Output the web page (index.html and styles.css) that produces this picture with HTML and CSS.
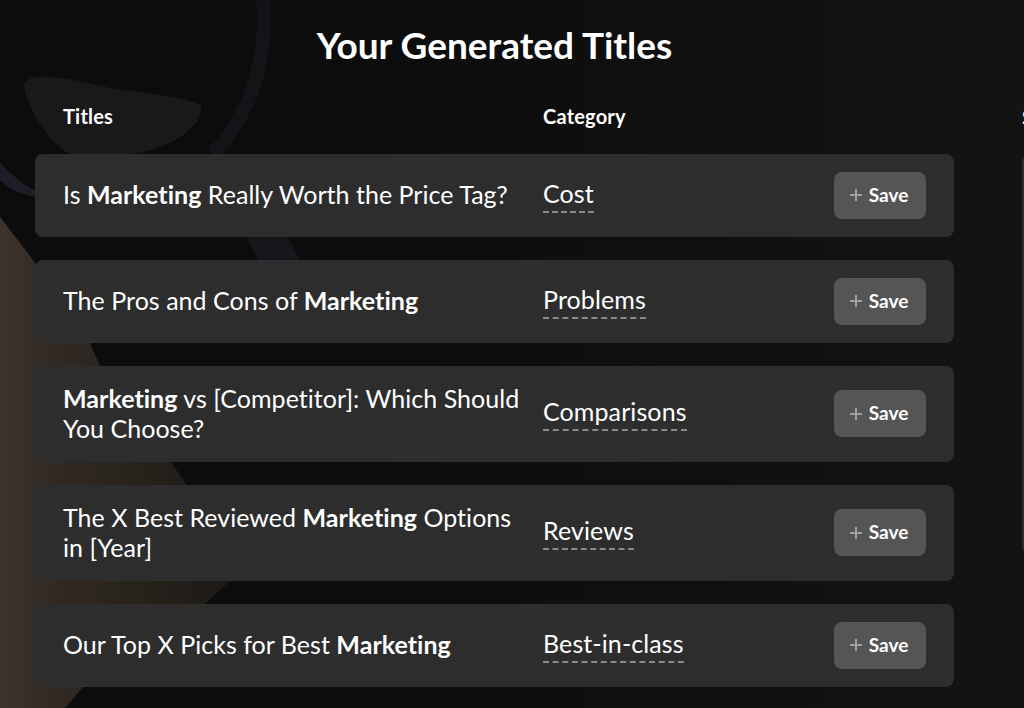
FILE: index.html
```html
<!DOCTYPE html>
<html lang="en">
<head>
<meta charset="utf-8">
<title>Your Generated Titles</title>
<link rel="stylesheet" href="styles.css">
</head>
<body>
<svg class="backdrop" viewBox="0 0 1024 708" width="1024" height="708" aria-hidden="true">
  <defs>
    <linearGradient id="skin" x1="0" y1="0" x2="1" y2="0">
      <stop offset="0" stop-color="#3e342e"/>
      <stop offset="0.2" stop-color="#322a25"/>
      <stop offset="0.6" stop-color="#28221c"/>
      <stop offset="1" stop-color="#1d1915"/>
    </linearGradient>
    <linearGradient id="wash" x1="0" y1="0" x2="1" y2="0">
      <stop offset="0.35" stop-color="#0c0c0c"/>
      <stop offset="1" stop-color="#131313"/>
    </linearGradient>
  </defs>
  <rect width="1024" height="708" fill="url(#wash)"/>
  <path fill="url(#skin)" d="M0 217 L33 260 L90 343 L100 366 L170 461 L187 485 L230 581 L205 604 L83 687 L65 708 L0 708 Z"/>
  <path class="blob-hat" d="M24 84 C30 72 60 76 110 88 C150 94 190 98 201 106 C205 125 170 150 130 154 L70 154 C45 140 26 105 24 84 Z"/>
  <path class="blob-rim" d="M263 0 C268 50 255 110 213 154"/>
  <path class="blob-band" d="M0 163 C15 178 25 186 35 190 L35 197 C20 194 5 186 0 180 Z"/>
  <path class="blob-shade" d="M247 237 L288 237 L300 260 L258 260 Z"/>
</svg>
<main class="page">
  <h1 class="heading">Your Generated Titles</h1>
  <div class="columns">
    <span class="col-title">Titles</span>
    <span class="col-category">Category</span>
  </div>
  <ul class="rows">
    <li class="row">
      <p class="title">Is <b>Marketing</b> Really Worth the Price Tag?</p>
      <div class="category"><span class="tag">Cost</span></div>
      <button class="save" type="button"><svg class="plus" viewBox="0 0 14 14" width="14" height="14"><path d="M7 1v12M1 7h12"/></svg>Save</button>
    </li>
    <li class="row">
      <p class="title">The Pros and Cons of <b>Marketing</b></p>
      <div class="category"><span class="tag">Problems</span></div>
      <button class="save" type="button"><svg class="plus" viewBox="0 0 14 14" width="14" height="14"><path d="M7 1v12M1 7h12"/></svg>Save</button>
    </li>
    <li class="row">
      <p class="title"><b>Marketing</b> vs [Competitor]: Which Should You Choose?</p>
      <div class="category"><span class="tag">Comparisons</span></div>
      <button class="save" type="button"><svg class="plus" viewBox="0 0 14 14" width="14" height="14"><path d="M7 1v12M1 7h12"/></svg>Save</button>
    </li>
    <li class="row">
      <p class="title">The X Best Reviewed <b>Marketing</b> Options in [Year]</p>
      <div class="category"><span class="tag">Reviews</span></div>
      <button class="save" type="button"><svg class="plus" viewBox="0 0 14 14" width="14" height="14"><path d="M7 1v12M1 7h12"/></svg>Save</button>
    </li>
    <li class="row">
      <p class="title">Our Top X Picks for Best <b>Marketing</b></p>
      <div class="category"><span class="tag">Best-in-class</span></div>
      <button class="save" type="button"><svg class="plus" viewBox="0 0 14 14" width="14" height="14"><path d="M7 1v12M1 7h12"/></svg>Save</button>
    </li>
  </ul>
</main>
<aside class="side">
  <h2 class="side-title">Saved</h2>
  <div class="side-panel"></div>
</aside>
</body>
</html>
```
FILE: styles.css
```css
* { box-sizing: border-box; }
html, body { margin: 0; height: 708px; overflow: hidden; }
body { background: #0c0c0c; color: #fff; font-family: "Lato", "Liberation Sans", sans-serif; font-variant-ligatures: none; position: relative; display: flex; }
.backdrop { position: absolute; left: 0; top: 0; }
.blob-hat { fill: #191919; }
.blob-rim { fill: none; stroke: #141418; stroke-width: 14; }
.blob-band { fill: #1d1d28; }
.blob-shade { fill: #16161c; }
.page { position: relative; flex: none; width: 919px; margin-left: 35px; padding-top: 23px; }
.heading { margin: 0; height: 44px; font-size: 37px; line-height: 44px; font-weight: 700; text-align: center; }
.columns { display: flex; margin-top: 37px; height: 25px; padding-left: 28px; font-size: 20px; line-height: 24px; font-weight: 700; letter-spacing: 0.2px; }
.col-title { width: 480px; }
.rows { list-style: none; margin: 25px 0 0; padding: 0; display: flex; flex-direction: column; gap: 23.25px; }
.row { display: flex; align-items: center; background: #2d2d2d; border-radius: 8px; padding: 17.875px 28px 17.875px 28px; }
.title { margin: 0; width: 480px; padding-right: 20px; font-size: 25px; line-height: 30px; font-weight: 400; letter-spacing: 0.03px; position: relative; top: -1px; }
.title b { font-weight: 700; }
.category { flex: 1; font-size: 25px; letter-spacing: 0.1px; }
.tag { display: inline-block; line-height: 29px; padding-bottom: 3px; border-bottom: 2px dashed #8a8a8a; }
.save { display: flex; align-items: center; justify-content: center; gap: 6px; width: 92px; height: 47px; border: 0; border-radius: 8px; background: #555556; color: #fff; font-family: inherit; font-size: 19px; font-weight: 700; padding: 0 0 2px; }
.plus { fill: none; stroke: #a0a0a0; stroke-width: 2; margin-left: -3px; margin-top: 2px; }
.side { position: relative; flex: none; width: 300px; margin-left: 68px; padding-top: 105px; }
.side-title { margin: 0; font-size: 20px; line-height: 24px; font-weight: 700; }
.side-panel { height: 400px; margin-top: 25px; background: #2d2d2d; border-radius: 8px; }
```
